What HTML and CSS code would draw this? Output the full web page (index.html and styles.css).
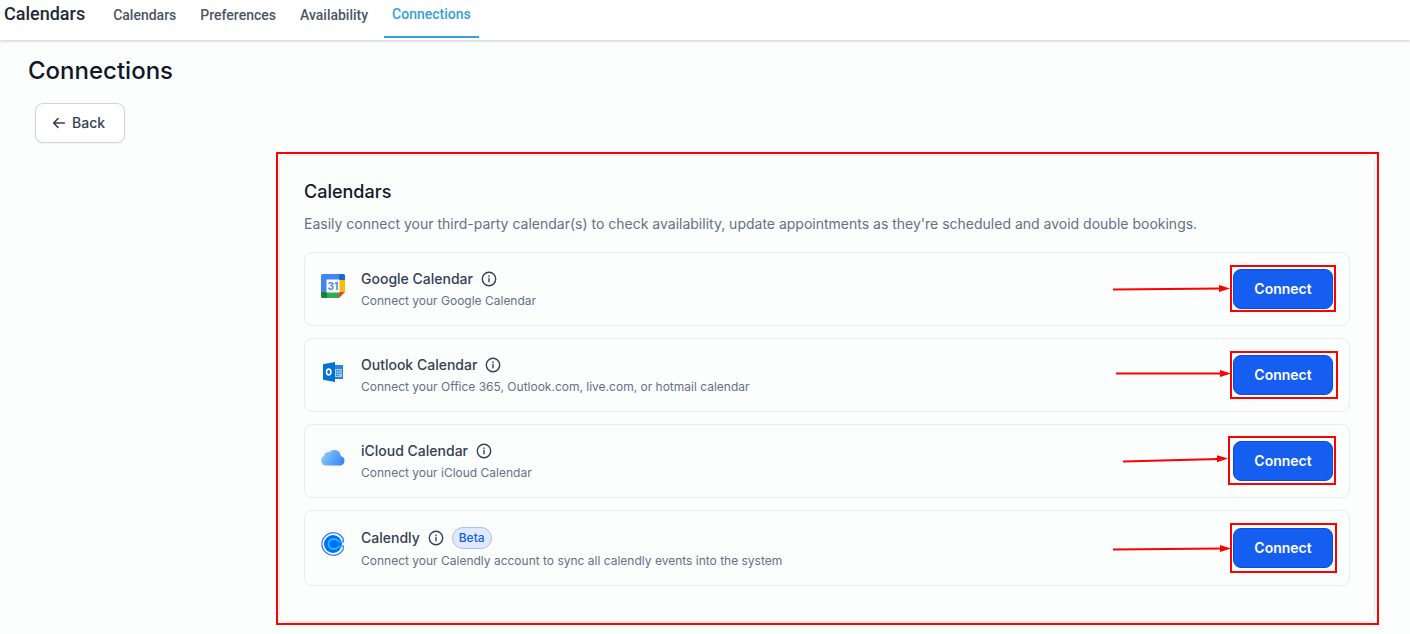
FILE: index.html
```html
<!DOCTYPE html>
<html lang="en">
<head>
<meta charset="utf-8">
<title>Calendars - Connections</title>
<link rel="stylesheet" href="styles.css">
</head>
<body>
<svg class="defs" aria-hidden="true">
  <symbol id="info" viewBox="0 0 16 16">
    <circle cx="8" cy="8" r="6.7" fill="none" stroke="currentColor" stroke-width="1.4"/>
    <path d="M8 7.4v3.4M8 5v.6" fill="none" stroke="currentColor" stroke-width="1.4" stroke-linecap="round"/>
  </symbol>
</svg>
<header class="topbar">
  <span class="topbar-title">Calendars</span>
  <nav class="tabs">
    <a class="tab" href="#">Calendars</a>
    <a class="tab" href="#">Preferences</a>
    <a class="tab" href="#">Availability</a>
    <a class="tab tab-active" href="#">Connections</a>
  </nav>
</header>
<main class="page">
  <h1 class="page-title">Connections</h1>
  <button class="back" type="button">
    <svg class="back-icon" viewBox="0 0 14 14" aria-hidden="true"><path d="M12.4 7H1.6M6 2.6 1.6 7 6 11.4" fill="none" stroke="currentColor" stroke-width="1.5" stroke-linecap="round" stroke-linejoin="round"/></svg>
    Back
  </button>
  <section class="card">
    <h2 class="card-title">Calendars</h2>
    <p class="card-text">Easily connect your third-party calendar(s) to check availability, update appointments as they're scheduled and avoid double bookings.</p>
    <ul class="list">
      <li class="row">
        <svg class="logo" viewBox="0 0 24 24" aria-hidden="true">
          <path d="M1.5 0H18v6H6v12H0V1.5A1.5 1.5 0 0 1 1.5 0z" fill="#4285f4"/>
          <path d="M18 0h4.5A1.5 1.5 0 0 1 24 1.5V6h-6z" fill="#1967d2"/>
          <path d="M18 6h6v12h-6z" fill="#fbbc04"/>
          <path d="M6 18h12v6H6z" fill="#34a853"/>
          <path d="M0 18h6v6H1.5A1.5 1.5 0 0 1 0 22.5z" fill="#188038"/>
          <path d="M18 18h6l-6 6z" fill="#ea4335"/>
          <path d="M5.500 5.500h13v13h-13z" fill="#fff"/>
          <text x="12" y="15.700" class="logo-day">31</text>
        </svg>
        <div class="info">
          <div class="name">Google Calendar <svg class="info-icon" aria-hidden="true"><use href="#info"/></svg></div>
          <p class="note">Connect your Google Calendar</p>
        </div>
        <div class="action">
          <button class="connect" type="button">Connect</button>
          <svg class="mark" viewBox="0 0 230 60" aria-hidden="true"><rect x="118" y="7" width="104" height="45"/><path d="M0 30.5 108 29.5"/><path class="tip" d="M106 26l11 3.500-11 3.500z"/></svg>
        </div>
      </li>
      <li class="row">
        <svg class="logo" viewBox="0 0 24 24" aria-hidden="true">
          <path d="M13 5h9v14h-9z" fill="#2383dc"/>
          <path d="M14 9h7v8h-7z" fill="#a9d0f5"/>
          <path d="M15 10h1.5v1.5H15zM17.2 10h1.300v1.500h-1.300zM19.300 10h1v1.500h-1zM15 12.400h1.500v1.500H15zM17.200 12.400h1.300v1.500h-1.300zM19.300 12.400h1v1.500h-1zM15 14.800h1.500V16H15zM17.200 14.800h1.300V16h-1.300z" fill="#1a7fdc"/>
          <path d="M2 4.200 14 2v20L2 19.800z" fill="#0072d2"/>
          <ellipse cx="7.700" cy="12" rx="2.200" ry="2.900" fill="none" stroke="#fff" stroke-width="1.600"/>
        </svg>
        <div class="info">
          <div class="name">Outlook Calendar <svg class="info-icon" aria-hidden="true"><use href="#info"/></svg></div>
          <p class="note">Connect your Office 365, Outlook.com, live.com, or hotmail calendar</p>
        </div>
        <div class="action">
          <button class="connect" type="button">Connect</button>
          <svg class="mark" viewBox="0 0 230 60" aria-hidden="true"><rect x="118" y="7" width="106" height="46"/><path d="M3 28.5H109"/><path class="tip" d="M107 25l11 3.500-11 3.500z"/></svg>
        </div>
      </li>
      <li class="row">
        <svg class="logo" viewBox="0 0 24 24" aria-hidden="true">
          <defs><linearGradient id="cloud" x1="0" y1="0.3" x2="1" y2="0.7"><stop offset="0" stop-color="#86cdfa"/><stop offset="1" stop-color="#3b82f6"/></linearGradient></defs>
          <path d="M3 4.300h19" stroke="#d9eafc" stroke-width=".6"/>
          <path d="M5.200 19.500A5.100 5.100 0 0 1 3.100 9.800 3.900 3.900 0 0 1 8.300 6.200 6.600 6.600 0 0 1 19.800 9.900 4.900 4.900 0 0 1 19.200 19.500z" fill="url(#cloud)"/>
        </svg>
        <div class="info">
          <div class="name">iCloud Calendar <svg class="info-icon" aria-hidden="true"><use href="#info"/></svg></div>
          <p class="note">Connect your iCloud Calendar</p>
        </div>
        <div class="action">
          <button class="connect" type="button">Connect</button>
          <svg class="mark" viewBox="0 0 230 60" aria-hidden="true"><rect x="116" y="6" width="106" height="47"/><path d="M10 30.5 106 28"/><path class="tip" d="M104 24.300l11 3.200-11 3.800z"/></svg>
        </div>
      </li>
      <li class="row">
        <svg class="logo" viewBox="0 0 24 24" aria-hidden="true">
          <path d="M21.900 6.200A11.300 11.300 0 1 0 21.900 17.800" fill="none" stroke="#2f7dfb" stroke-width="1.300"/>
          <path d="M21.500 5.600c1.300 2.200 1.200 3.800.2 5.200M21.500 18.400c1.300-2.200 1.200-3.800.2-5.200" fill="none" stroke="#2f7dfb" stroke-width="1.200"/>
          <circle cx="12" cy="12" r="9" fill="#006bff"/>
          <path d="M17.300 9C14.800 5.900 7.600 6.300 7.600 12s7.200 6.100 9.700 3" fill="none" stroke="#0acff5" stroke-width="1.700"/>
          <path d="M17 8.800c1 .6 2.400 1 4.200 1.200M17 15.200c1-.6 2.400-1 4.200-1.200" fill="none" stroke="#0ac8f5" stroke-width="1.500"/>
        </svg>
        <div class="info">
          <div class="name">Calendly <svg class="info-icon" aria-hidden="true"><use href="#info"/></svg><span class="badge">Beta</span></div>
          <p class="note">Connect your Calendly account to sync all calendly events into the system</p>
        </div>
        <div class="action">
          <button class="connect" type="button">Connect</button>
          <svg class="mark" viewBox="0 0 230 60" aria-hidden="true"><rect x="118" y="6" width="105" height="48"/><path d="M0 31.5 109 30.5"/><path class="tip" d="M107 27l11 3.500-11 3.500z"/></svg>
        </div>
      </li>
    </ul>
  </section>
</main>
</body>
</html>
```
FILE: styles.css
```css
* { box-sizing: border-box; }
body {
  margin: 0;
  background: #fcfefd;
  color: #344054;
  font-family: Inter, "Liberation Sans", sans-serif;
}
h1, h2, p, ul { margin: 0; padding: 0; }
button { font-family: inherit; cursor: pointer; }
.defs { display: none; }

.topbar {
  display: flex;
  height: 40px;
  padding-left: 4px;
  background: #fff;
  box-shadow: 0 1px 3px rgba(0, 0, 0, .2);
  font-family: Roboto, "Liberation Sans", sans-serif;
  font-weight: 500;
}
.topbar-title { color: #1f2937; font-size: 18px; line-height: 28px; }
.tabs { display: flex; gap: 8px; margin-left: 20px; }
.tab {
  height: 38px;
  padding: 0 8px;
  color: #4b5563;
  font-size: 14px;
  line-height: 30px;
  text-decoration: none;
}
.tab-active { border-bottom: 2px solid #38a0db; color: #38a0db; line-height: 28px; }

.page { padding: 15px 35px 12px; }
.page-title {
  margin-left: -7px;
  color: #101828;
  font-size: 24px;
  font-weight: 500;
  line-height: 32px;
}
.back {
  display: flex;
  align-items: center;
  gap: 6px;
  height: 40px;
  margin-top: 16px;
  padding: 0 19px 1px 16px;
  border: 1px solid #d0d5dd;
  border-radius: 8px;
  background: #fff;
  box-shadow: 0 1px 2px rgba(16, 24, 40, .05);
  color: #344054;
  font-size: 14px;
  font-weight: 500;
}
.back-icon { width: 14px; height: 14px; }

.card {
  position: relative;
  margin: 12px 0 0 244px;
  padding: 24px;
  padding-bottom: 35px;
  border: 1px solid #eaecf0;
  border-radius: 8px;
  box-shadow: 0 1px 2px rgba(16, 24, 40, .06);
}
.card::after {
  content: "";
  position: absolute;
  inset: -4px -5px -4px -4px;
  border: 2px solid #f00;
  pointer-events: none;
}
.card-title { color: #101828; font-size: 18px; font-weight: 500; line-height: 24px; }
.card-text { margin-top: 10px; color: #667085; font-size: 14px; line-height: 20px; }
.list { display: grid; gap: 12px; margin-top: 18px; list-style: none; }
.row {
  display: flex;
  align-items: center;
  padding: 16px;
  border: 1px solid #eaecf0;
  border-radius: 8px;
}
.logo { flex: none; align-self: flex-start; width: 24px; height: 24px; margin-top: 5px; }
.logo-day { fill: #4285f4; font-size: 10px; font-weight: 700; text-anchor: middle; }
.info { flex: 1; margin-left: 16px; }
.name { display: flex; align-items: center; gap: 8px; font-size: 14px; font-weight: 500; line-height: 20px; }
.info-icon { width: 16px; height: 16px; }
.note { margin-top: 4px; color: #667085; font-size: 12px; line-height: 16px; }
.badge {
  padding: 0 6px;
  border: 1px solid #a4c2fb;
  border-radius: 11px;
  background: #e0eafc;
  color: #155eef;
  font-size: 12px;
  font-weight: 500;
  line-height: 20px;
}
.action { position: relative; height: 40px; }
.connect {
  width: 100px;
  height: 40px;
  padding: 0 0 2px;
  border: 1px solid #004eeb;
  border-radius: 8px;
  background: #155eef;
  color: #fff;
  font-size: 14px;
  font-weight: 600;
}
.mark {
  position: absolute;
  top: -10px;
  left: -120px;
  width: 230px;
  height: 60px;
  fill: none;
  stroke: #f00;
  stroke-width: 2;
  pointer-events: none;
}
.mark .tip { fill: #f00; stroke: none; }
```
